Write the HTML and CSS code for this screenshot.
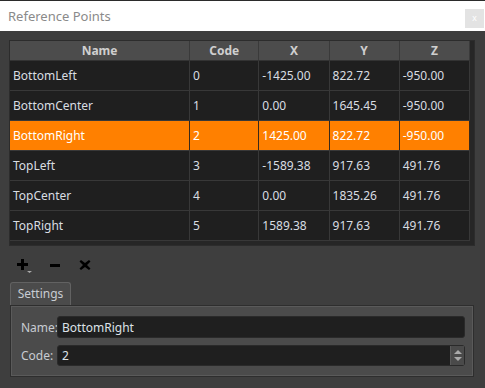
FILE: index.html
```html
<!DOCTYPE html>
<html lang="en">
<head>
    <meta charset="utf-8"/>
    <title>Reference Points</title>
    <link rel="stylesheet" href="styles.css">
</head>
<body>
<div class="titlebar">
    <span class="title">Reference Points</span>
    <button class="close" title="close">x</button>
</div>
<div class="content">
    <div class="grid-frame">
        <table class="grid">
            <colgroup>
                <col class="c-name"><col class="c-code"><col class="c-num"><col class="c-num"><col class="c-num">
            </colgroup>
            <thead>
                <tr><th>Name</th><th>Code</th><th>X</th><th>Y</th><th>Z</th></tr>
            </thead>
            <tbody>
                <tr><td>BottomLeft</td><td>0</td><td>-1425.00</td><td>822.72</td><td>-950.00</td></tr>
                <tr><td>BottomCenter</td><td>1</td><td>0.00</td><td>1645.45</td><td>-950.00</td></tr>
                <tr class="selected"><td>BottomRight</td><td>2</td><td>1425.00</td><td>822.72</td><td>-950.00</td></tr>
                <tr><td>TopLeft</td><td>3</td><td>-1589.38</td><td>917.63</td><td>491.76</td></tr>
                <tr><td>TopCenter</td><td>4</td><td>0.00</td><td>1835.26</td><td>491.76</td></tr>
                <tr><td>TopRight</td><td>5</td><td>1589.38</td><td>917.63</td><td>491.76</td></tr>
            </tbody>
        </table>
    </div>

    <div class="toolbar">
        <button class="tool" title="add">
            <svg width="16" height="14" viewBox="0 0 16 14">
                <path d="M4 0h3v4h4v3H7v4H4V7H0V4h4z" fill="#000"/>
                <path d="M10 12h5l-2.5 2z" fill="#aaa"/>
            </svg>
        </button>
        <button class="tool" title="remove">
            <svg width="12" height="14" viewBox="0 0 12 14">
                <rect x="1" y="5" width="10" height="3" fill="#000"/>
            </svg>
        </button>
        <button class="tool" title="clear">
            <svg width="12" height="14" viewBox="0 0 12 14">
                <path d="M2 1l4 3 4-3 1.5 1.5-3.5 3.5 3.5 3.5L10 11 6 8l-4 3-1.5-1.5L4 6 .5 2.5z" fill="#000"/>
            </svg>
        </button>
    </div>

    <div class="tabs">
        <div class="tab">Settings</div>
    </div>
    <div class="panel">
        <div class="field">
            <label for="ptName">Name:</label>
            <input id="ptName" class="edit" type="text" value="BottomRight">
        </div>
        <div class="field">
            <label for="ptCode">Code:</label>
            <div class="spin">
                <input id="ptCode" class="edit" type="text" value="2">
                <div class="spin-btns">
                    <span class="up"></span>
                    <span class="down"></span>
                </div>
            </div>
        </div>
    </div>
</div>
</body>
</html>
```

FILE: styles.css
```css
html {
    font-family: "Noto Sans", "Open Sans", sans-serif;
    font-size: 12px;
}
body {
    margin: 0;
    background: #3e3e3e;
    width: 485px;
    height: 388px;
    overflow: hidden;
}
.titlebar {
    height: 30px;
    background: #fff;
    border-top: 1px solid #2b2b2b;
    display: flex;
    align-items: center;
    justify-content: space-between;
    padding: 0 1px 0 8px;
}
.title {
    color: #8a8a8a;
    font-size: 13px;
}
.close {
    width: 19px;
    height: 19px;
    border: none;
    background: #e3e3e3;
    color: #fff;
    font-size: 9px;
    padding: 0;
    margin-top: 4px;
}
.content {
    padding: 9px 9px 0 9px;
}
.grid-frame {
    width: 460px;
    border: 1px solid #2c2c2c;
    background: #262626;
    padding: 0 4px 4px 0;
}
.grid {
    border-collapse: collapse;
    table-layout: fixed;
    width: 460px;
}
.c-name { width: 179px; }
.c-code { width: 69px; }
.c-num { width: 70px; }
.grid th {
    height: 19px;
    background: #4c4c4c;
    color: #cfcfcf;
    font-weight: bold;
    font-size: 12px;
    padding: 0;
    border-right: 1px solid #3a3a3a;
    border-bottom: 1px solid #333;
}
.grid td {
    height: 29px;
    background: #1f1f1f;
    color: #d8dde2;
    padding: 0 3px;
    border: 1px solid #383838;
    border-top: none;
    border-left: none;
    white-space: nowrap;
}
.grid tr.selected td {
    background: #ff8000;
    color: #fff;
    border-right-color: #3a2a1a;
}
.toolbar {
    display: flex;
    align-items: center;
    gap: 10px;
    height: 26px;
    padding: 7px 0 0 6px;
}
.tool {
    border: none;
    background: transparent;
    padding: 0;
    width: 20px;
    height: 16px;
    display: flex;
    align-items: center;
    justify-content: center;
}
.tabs {
    display: flex;
    padding-top: 3px;
}
.tab {
    width: 59px;
    height: 22px;
    margin-left: 1px;
    background: #4b4b4b;
    border: 1px solid #626262;
    border-bottom: none;
    border-radius: 3px 3px 0 0;
    color: #c8ccd2;
    font-size: 12px;
    line-height: 22px;
    text-align: center;
}
.panel {
    width: 464px;
    margin-left: 1px;
    background: #4b4b4b;
    border: 1px solid #2e2e2e;
    box-shadow: inset 0 0 0 1px #5a5a5a;
    padding: 10px 0 0 0;
    box-sizing: border-box;
    height: 72px;
    display: flex;
    flex-direction: column;
    gap: 7px;
}
.field {
    display: flex;
    align-items: center;
    padding-left: 10px;
}
.field label {
    width: 36px;
    color: #c8ccd2;
}
.edit {
    width: 408px;
    height: 22px;
    box-sizing: border-box;
    background: #1f1f1f;
    border: 1px solid #2a2a2a;
    border-radius: 3px;
    color: #dde2e8;
    font-family: inherit;
    font-size: 12px;
    padding: 0 4px;
    outline: none;
}
.spin {
    position: relative;
}
.spin .edit {
    height: 21px;
}
.spin-btns {
    position: absolute;
    right: 1px;
    top: 1px;
    width: 13px;
    height: 19px;
    background: #4a4a4a;
    border-left: 1px solid #5a5a5a;
    display: flex;
    flex-direction: column;
    justify-content: center;
    align-items: center;
    gap: 3px;
}
.spin-btns .up {
    border: 4px solid transparent;
    border-top: none;
    border-bottom: 4px solid #aaa;
}
.spin-btns .down {
    border: 4px solid transparent;
    border-bottom: none;
    border-top: 4px solid #aaa;
}
```
